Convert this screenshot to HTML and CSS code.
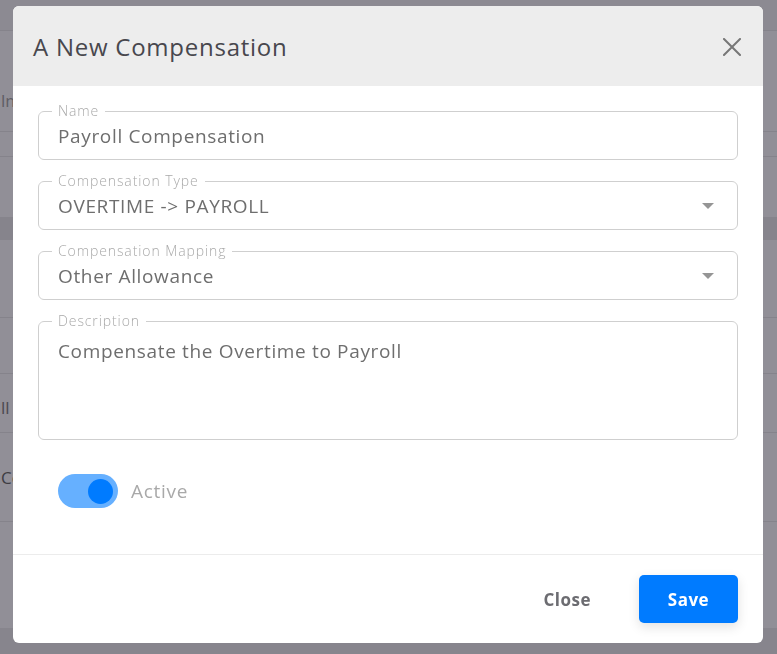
FILE: index.html
```html
<!DOCTYPE html>
<html lang="en">
<head>
<meta charset="utf-8">
<title>A New Compensation</title>
<link rel="stylesheet" href="styles.css">
</head>
<body>
<div class="page">
  <div class="row r1"></div>
  <div class="row r2"><span class="bg-text t-im">lmports</span></div>
  <div class="row r3"></div>
  <div class="row r4"></div>
  <div class="row band"></div>
  <div class="row r5"></div>
  <div class="row r6"></div>
  <div class="row r7"><span class="bg-text t-ll">ll  Payroll</span></div>
  <div class="row r8"><span class="bg-text t-c">Compensation</span></div>
  <div class="row r9"></div>
  <div class="row band2"></div>
</div>

<div class="overlay">
  <div class="dialog">
    <div class="dlg-head">
      <h2 class="dlg-title">A New Compensation</h2>
      <button class="dlg-x" aria-label="Close">
        <svg width="18" height="18" viewBox="0 0 18 18"><path d="M1 1 L17 17 M17 1 L1 17" stroke="#777" stroke-width="2" stroke-linecap="square" fill="none"/></svg>
      </button>
    </div>
    <div class="dlg-body">
      <fieldset class="field">
        <legend>Name</legend>
        <div class="val">Payroll Compensation</div>
      </fieldset>
      <fieldset class="field">
        <legend>Compensation Type</legend>
        <div class="val">OVERTIME -&gt; PAYROLL<span class="caret"></span></div>
      </fieldset>
      <fieldset class="field">
        <legend>Compensation Mapping</legend>
        <div class="val">Other Allowance<span class="caret"></span></div>
      </fieldset>
      <fieldset class="field area">
        <legend>Description</legend>
        <div class="val">Compensate the Overtime to Payroll</div>
      </fieldset>
      <div class="switch-row">
        <span class="switch"><span class="knob"></span></span>
        <span class="switch-label">Active</span>
      </div>
    </div>
    <div class="dlg-foot">
      <button class="btn btn-close">Close</button>
      <button class="btn btn-save">Save</button>
    </div>
  </div>
</div>
</body>
</html>
```

FILE: styles.css
```css
* { box-sizing: border-box; }
html, body { margin: 0; padding: 0; }
body {
  width: 777px;
  height: 654px;
  overflow: hidden;
  background: #908e96;
  font-family: "Open Sans", "Liberation Sans", sans-serif;
}

/* dimmed page behind the dialog */
.page { display: flex; flex-direction: column; }
.row {
  border-bottom: 1px solid #85838b;
  background: #918f97;
  display: flex;
  align-items: center;
  white-space: pre;
}
.r1 { height: 31px; background: #8c8a92; }
.r2 { height: 101px; align-items: flex-end; padding-bottom: 22px; }
.r3 { height: 25px; }
.r4 { height: 60px; border-bottom: none; }
.band { height: 23px; background: #86848c; border-bottom: none; }
.r5 { height: 78px; }
.r6 { height: 56px; }
.r7 { height: 59px; padding-top: 8px; }
.r8 { height: 89px; }
.r9 { height: 106px; border-bottom: none; }
.band2 { height: 30px; background: #87858d; border-bottom: none; }
.bg-text { font-size: 17px; color: #5e5d64; line-height: 1; }
.t-im { margin-left: 1px; }
.t-ll { margin-left: 1px; color: #4a4950; }
.t-c { margin-left: 1px; color: #3e3d43; }

/* modal */
.overlay {
  position: fixed;
  inset: 0;
  padding: 6px 0 0 13px;
}
.dialog {
  width: 750px;
  background: #fff;
  border-radius: 6px;
  overflow: hidden;
  display: flex;
  flex-direction: column;
}
.dlg-head {
  height: 80px;
  background: #ededed;
  display: flex;
  align-items: center;
  justify-content: space-between;
  padding: 0 22px 0 20px;
}
.dlg-title {
  margin: 0;
  font-size: 24px;
  font-weight: 500;
  color: #48474d;
  letter-spacing: 0.75px;
}
.dlg-x {
  border: 0;
  background: none;
  padding: 0;
  width: 18px;
  height: 18px;
  display: flex;
  margin-top: 1px;
}

.dlg-body {
  padding: 17px 25px 46px 25px;
  display: flex;
  flex-direction: column;
}
.field {
  margin: 13px 0 0 0;
  padding: 0 23px 0 13px;
  border: 1px solid #cfcfcf;
  border-radius: 6px;
  min-inline-size: 0;
}
.field:first-child { margin-top: 0; }
.field legend {
  padding: 0 6px;
  font-size: 14px;
  line-height: 16px;
  font-weight: 300;
  color: #a9a9a9;
  letter-spacing: 0.9px;
}
.val {
  height: 40px;
  padding: 4px 0 10px 6px;
  font-size: 19px;
  line-height: 26px;
  font-weight: 380;
  color: #6e6e6e;
  letter-spacing: 0.65px;
  display: flex;
  align-items: center;
  justify-content: space-between;
}
.area .val { height: 110px; padding-top: 9px; align-items: flex-start; }
.caret {
  width: 0;
  height: 0;
  border-left: 6px solid transparent;
  border-right: 6px solid transparent;
  border-top: 6px solid #959595;
}

.switch-row {
  margin-top: 34px;
  padding-left: 20px;
  display: flex;
  align-items: center;
  gap: 13px;
}
.switch {
  width: 60px;
  height: 34px;
  border-radius: 17px;
  background: #66b0ff;
  display: flex;
  align-items: center;
  justify-content: flex-end;
  padding-right: 5px;
}
.knob {
  width: 25px;
  height: 25px;
  border-radius: 50%;
  background: #007bff;
}
.switch-label {
  font-size: 19px;
  color: #a9a9a9;
  font-weight: 380;
  letter-spacing: 0.7px;
}

.dlg-foot {
  height: 89px;
  border-top: 1px solid #ececec;
  display: flex;
  align-items: center;
  justify-content: flex-end;
  gap: 22px;
  padding: 0 25px;
}
.btn {
  height: 48px;
  border: 0;
  border-radius: 5px;
  font-family: "Open Sans", "Liberation Sans", sans-serif;
  font-size: 17px;
  font-weight: 700;
  letter-spacing: 0.5px;
  padding: 0 26px;
  cursor: pointer;
}
.btn-close { background: transparent; color: #6c6c71; }
.btn-save {
  width: 99px;
  background: #007bff;
  color: #fff;
  box-shadow: 0 4px 12px rgba(0, 0, 0, 0.12);
}
```
